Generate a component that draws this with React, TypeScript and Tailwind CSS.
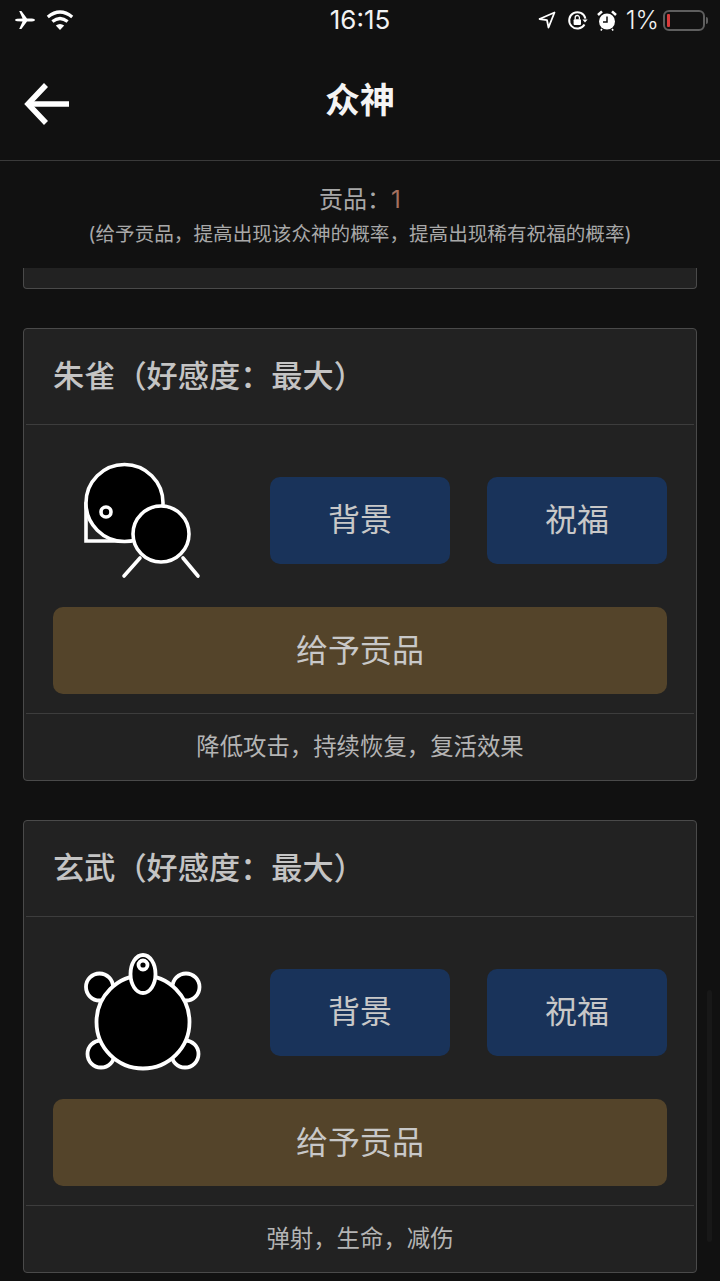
const CJK = "font-['Inter','Noto_Sans_CJK_SC',sans-serif] [text-spacing-trim:space-all]";

function PlaneIcon() {
  return (
    <svg width="22" height="20" viewBox="0 0 22 20" fill="#fff">
      <path d="M1 10 Q1 9 3 8.8 L8.6 8.6 L5.2 1 L7.4 1 L13 8.6 L18 8.6 Q21 8.8 21 10 Q21 11.2 18 11.4 L13 11.4 L7.4 19 L5.2 19 L8.6 11.4 L3 11.2 Q1 11 1 10 Z" />
    </svg>
  );
}

function WifiIcon() {
  return (
    <svg width="28" height="22" viewBox="0 0 28 22" fill="none" stroke="#fff" strokeWidth="3.2">
      <path d="M1.8 8 Q14 -2 26.2 8" />
      <path d="M6.4 12.6 Q14 6.4 21.6 12.6" />
      <path d="M14 21 L9.8 16.6 Q14 13.6 18.2 16.6 Z" fill="#fff" stroke="none" />
    </svg>
  );
}

function StatusRight() {
  return (
    <div className="flex items-center">
      <svg width="18" height="18" viewBox="0 0 18 18" fill="none" stroke="#fff" strokeWidth="1.8" strokeLinejoin="round">
        <path d="M16.5 1.5 L1.5 8 L9 9.2 L10.5 16.5 Z" />
      </svg>
      <svg className="ml-[11px]" width="21" height="21" viewBox="0 0 21 21" fill="none">
        <path d="M17.5 14.5 A8.2 8.2 0 1 1 18.4 8.6" stroke="#fff" strokeWidth="2" />
        <path d="M15.4 9.4 L20.6 9.4 L18 12.6 Z" fill="#fff" />
        <rect x="6.6" y="9.2" width="7.4" height="5.8" rx="1" fill="#fff" />
        <path d="M8.2 9.4 V7.6 A2.1 2.1 0 0 1 12.4 7.6 V9.4" stroke="#fff" strokeWidth="1.3" />
      </svg>
      <svg className="ml-[9px]" width="20" height="21" viewBox="0 0 20 21" fill="none">
        <circle cx="10" cy="11.5" r="8" fill="#fff" />
        <path d="M10 6.5 V12 H6" stroke="#111" strokeWidth="1.5" />
        <path d="M1 5 L5 1.4 M19 5 L15 1.4" stroke="#fff" strokeWidth="2.6" />
        <path d="M5 19 L3.8 20.5 M15 19 L16.2 20.5" stroke="#fff" strokeWidth="1.6" />
      </svg>
      <span className="ml-[9px] text-[25px] leading-none font-light text-[#f2f2f2] font-['Inter',sans-serif]">1%</span>
      <div className="relative ml-[4px] flex h-[21px] w-[42px] items-center rounded-[6px] border-2 border-[#5e5e5e] pl-[2px]">
        <div className="h-[13px] w-[3px] rounded-[1px] bg-[#d83a3a]" />
        <div className="absolute -right-[5px] top-[5px] h-[7px] w-[2px] rounded-r-sm bg-[#5e5e5e]" />
      </div>
      <div className="w-[15px]" />
    </div>
  );
}

function BirdIcon() {
  return (
    <svg className="overflow-visible" width="116" height="116" viewBox="0 0 116 116" fill="none" stroke="#fff" strokeWidth="3.6" strokeLinecap="round">
      <path d="M2 41 V79 H41" />
      <circle cx="40.5" cy="41" r="38.5" fill="#000" />
      <circle cx="22" cy="50" r="5" />
      <circle cx="77" cy="72" r="28" fill="#000" />
      <path d="M56 96 L40 114 M99 96 L114 114" />
    </svg>
  );
}

function TurtleIcon() {
  return (
    <svg className="overflow-visible" width="116" height="116" viewBox="0 0 116 116" fill="none" stroke="#fff" strokeWidth="3.8">
      <circle cx="15.5" cy="33" r="13.5" fill="#000" />
      <circle cx="102" cy="33" r="13.5" fill="#000" />
      <circle cx="17" cy="100" r="13.5" fill="#000" />
      <circle cx="101" cy="100" r="13.5" fill="#000" />
      <circle cx="59" cy="68" r="46.5" fill="#000" />
      <ellipse cx="59" cy="20" rx="12.5" ry="19" fill="#000" />
      <circle cx="59" cy="11" r="4.5" />
    </svg>
  );
}

type CardProps = {
  name: string;
  icon: React.ReactNode;
  desc: string;
};

function GodCard({ name, icon, desc }: CardProps) {
  return (
    <div className="h-[453px] rounded-[4px] border border-[#4a4a4a] bg-[#222222]">
      <div className="mx-[2px] flex h-[96px] items-center border-b border-[#3d3d3d] pl-[27px] text-[31.2px] font-medium text-[#c4c4c4]">
        {name}
      </div>
      <div className="px-[29px] pt-[37px]">
        <div className="flex items-center">
          <div className="flex w-[217px] justify-start pl-[31px]">{icon}</div>
          <button className="h-[87px] w-[180px] rounded-[10px] bg-[#19335a] text-[32px] text-[#c8c8c8]">背景</button>
          <button className="ml-[37px] h-[87px] w-[180px] rounded-[10px] bg-[#19335a] text-[32px] text-[#c8c8c8]">祝福</button>
        </div>
        <button className="mt-[29px] h-[87px] w-full rounded-[10px] bg-[#54442a] text-[32px] text-[#c8c8c8]">给予贡品</button>
      </div>
      <div className="mx-[2px] mt-[19px] flex h-[67px] items-center justify-center border-t border-[#3d3d3d] text-[23.4px] text-[#b4b4b4]">
        {desc}
      </div>
    </div>
  );
}

export default function App() {
  return (
    <div className={`relative h-[1281px] w-[720px] overflow-hidden bg-[#111111] ${CJK}`}>
      <div className="flex h-[40px] items-center justify-between">
        <div className="flex items-center gap-[10px] pl-[14px]">
          <PlaneIcon />
          <WifiIcon />
        </div>
        <StatusRight />
      </div>
      <div className="absolute left-0 right-0 top-[5px] text-center text-[26px] leading-[30px] text-[#f2f2f2] font-['Inter',sans-serif]">16:15</div>

      <div className="relative flex h-[121px] items-center justify-center border-b border-[#3a3a3a]">
        <svg className="absolute left-[24px] top-[43px]" width="45" height="42" viewBox="0 0 45 42" fill="none" stroke="#fff" strokeWidth="5.5">
          <path d="M22 2 L4 21 L22 40" />
          <path d="M4 21 H45" />
        </svg>
        <h1 className="text-[35px] font-bold text-[#f4f4f4]">众神</h1>
      </div>

      <div className="flex h-[107px] flex-col items-center pt-[23px]">
        <div className="text-[24px] leading-[32px] text-[#a8a8a8]">
          贡品：<span className="text-[#a5705f]">1</span>
        </div>
        <div className="mt-[2px] text-[19.6px] leading-[32px] text-[#a8a8a8]">(给予贡品，提高出现该众神的概率，提高出现稀有祝福的概率)</div>
      </div>

      <div className="px-[23px]">
        <div className="h-[21px] rounded-b-[4px] border-x border-b border-[#4a4a4a] bg-[#222222]" />
        <div className="mt-[39px] flex flex-col gap-[39px]">
          <GodCard name="朱雀（好感度：最大）" icon={<BirdIcon />} desc="降低攻击，持续恢复，复活效果" />
          <GodCard name="玄武（好感度：最大）" icon={<TurtleIcon />} desc="弹射，生命，减伤" />
        </div>
      </div>

      <div className="absolute right-[8px] top-[990px] h-[252px] w-[5px] rounded-full bg-[#181818]" />
    </div>
  );
}
